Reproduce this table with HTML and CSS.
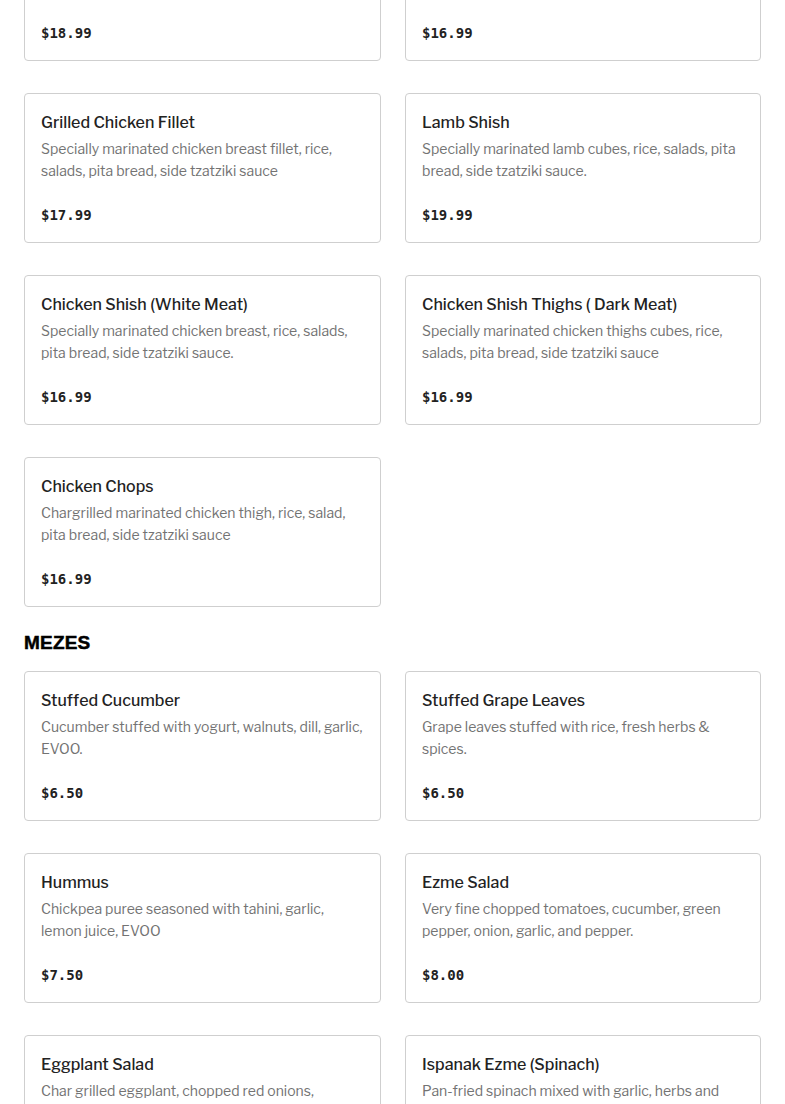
FILE: index.html
```html
<!DOCTYPE html>
<html>
<head>
<meta charset="utf-8">
<link rel="stylesheet" href="styles.css">
</head>
<body>
<main class="menu">
  <section class="section first">
    <div class="grid">
      <div class="card">
        <h3 class="title">Adana Kebab</h3>
        <p class="desc"><span class="ln">Hand minced lamb, rice, salads, pita bread,</span><span class="ln">side tzatziki sauce.</span></p>
        <div class="price">$18.99</div>
      </div>
      <div class="card">
        <h3 class="title">Chicken Adana</h3>
        <p class="desc"><span class="ln">Minced chicken, rice, salads, pita bread,</span><span class="ln">side tzatziki sauce.</span></p>
        <div class="price">$16.99</div>
      </div>
      <div class="card">
        <h3 class="title">Grilled Chicken Fillet</h3>
        <p class="desc"><span class="ln">Specially marinated chicken breast fillet, rice,</span><span class="ln">salads, pita bread, side tzatziki sauce</span></p>
        <div class="price">$17.99</div>
      </div>
      <div class="card">
        <h3 class="title">Lamb Shish</h3>
        <p class="desc"><span class="ln">Specially marinated lamb cubes, rice, salads, pita</span><span class="ln">bread, side tzatziki sauce.</span></p>
        <div class="price">$19.99</div>
      </div>
      <div class="card">
        <h3 class="title">Chicken Shish (White Meat)</h3>
        <p class="desc"><span class="ln">Specially marinated chicken breast, rice, salads,</span><span class="ln">pita bread, side tzatziki sauce.</span></p>
        <div class="price">$16.99</div>
      </div>
      <div class="card">
        <h3 class="title">Chicken Shish Thighs ( Dark Meat)</h3>
        <p class="desc"><span class="ln">Specially marinated chicken thighs cubes, rice,</span><span class="ln">salads, pita bread, side tzatziki sauce</span></p>
        <div class="price">$16.99</div>
      </div>
      <div class="card">
        <h3 class="title">Chicken Chops</h3>
        <p class="desc"><span class="ln">Chargrilled marinated chicken thigh, rice, salad,</span><span class="ln">pita bread, side tzatziki sauce</span></p>
        <div class="price">$16.99</div>
      </div>
    </div>
  </section>
  <section class="section">
    <h2 class="heading">MEZES</h2>
    <div class="grid">
      <div class="card">
        <h3 class="title">Stuffed Cucumber</h3>
        <p class="desc"><span class="ln">Cucumber stuffed with yogurt, walnuts, dill, garlic,</span><span class="ln">EVOO.</span></p>
        <div class="price">$6.50</div>
      </div>
      <div class="card">
        <h3 class="title">Stuffed Grape Leaves</h3>
        <p class="desc"><span class="ln">Grape leaves stuffed with rice, fresh herbs &amp;</span><span class="ln">spices.</span></p>
        <div class="price">$6.50</div>
      </div>
      <div class="card">
        <h3 class="title">Hummus</h3>
        <p class="desc"><span class="ln">Chickpea puree seasoned with tahini, garlic,</span><span class="ln">lemon juice, EVOO</span></p>
        <div class="price">$7.50</div>
      </div>
      <div class="card">
        <h3 class="title">Ezme Salad</h3>
        <p class="desc"><span class="ln">Very fine chopped tomatoes, cucumber, green</span><span class="ln">pepper, onion, garlic, and pepper.</span></p>
        <div class="price">$8.00</div>
      </div>
      <div class="card">
        <h3 class="title">Eggplant Salad</h3>
        <p class="desc"><span class="ln">Char grilled eggplant, chopped red onions,</span><span class="ln">parsley, garlic, EVOO.</span></p>
        <div class="price">$8.00</div>
      </div>
      <div class="card">
        <h3 class="title">Ispanak Ezme (Spinach)</h3>
        <p class="desc"><span class="ln">Pan-fried spinach mixed with garlic, herbs and</span><span class="ln">yogurt.</span></p>
        <div class="price">$8.00</div>
      </div>
    </div>
  </section>
</main>
</body>
</html>
```

FILE: styles.css
```css
* { box-sizing: border-box; }
html, body { margin: 0; padding: 0; background: #fff; }
body {
  font-family: "Libre Franklin", "Inter", "Noto Sans", sans-serif;
  color: #1f1f1f;
}
.menu { padding: 0 24px; }
.section.first { margin-top: -89px; }
.section + .section { margin-top: 24px; }
.heading {
  margin: 0 0 16px;
  font-family: "Liberation Sans", Arial, sans-serif;
  font-weight: 900;
  font-size: 19px;
  line-height: 24px;
  color: #000;
  letter-spacing: 0.2px;
  -webkit-text-stroke: 0.5px #000;
}
.grid {
  display: grid;
  grid-template-columns: 357px 356px;
  column-gap: 24px;
  row-gap: 32px;
}
.card {
  border: 1px solid #cfcfcf;
  border-radius: 4px;
  padding: 16px;
  height: 150px;
  display: flex;
  flex-direction: column;
}
.title {
  margin: 0;
  font-size: 16px;
  font-weight: 500;
  line-height: 26px;
  color: #222;
}
.desc {
  margin: 2px 0 0;
  font-size: 14px;
  line-height: 22px;
  color: #737373;
  flex: 1;
}
.ln {
  display: block;
  white-space: nowrap;
}
.price {
  font-family: "DejaVu Sans Mono", "Liberation Mono", monospace;
  font-weight: bold;
  font-size: 14px;
  line-height: 22px;
  color: #222;
}
```
